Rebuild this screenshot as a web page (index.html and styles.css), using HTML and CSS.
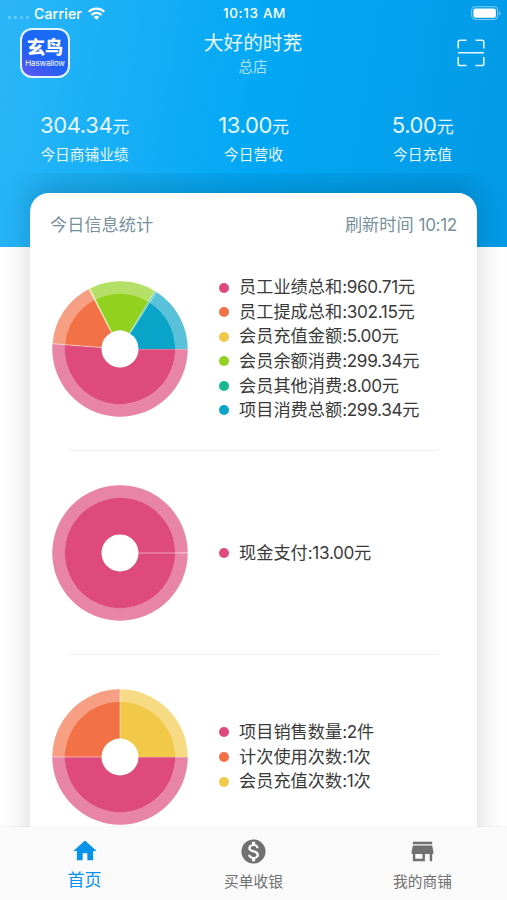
FILE: index.html
```html
<!DOCTYPE html>
<html lang="zh-CN">
<head>
    <meta charset="UTF-8">
    <meta name="viewport" content="width=device-width, initial-scale=1.0">
    <title>首页</title>
    <link rel="stylesheet" href="styles.css">
</head>
<body>
    <header class="header">
        <div class="status-bar">
            <div class="carrier">
                <span class="signal"><i></i><i></i><i></i><i></i></span>
                <span>Carrier</span>
                <svg class="wifi" viewBox="0 0 20 15" width="19" height="15">
                    <path d="M1.8 5.7a11.8 11.8 0 0 1 16.4 0M4.8 9a7.5 7.5 0 0 1 10.4 0" fill="none" stroke="#fff" stroke-width="2.3"/>
                    <path d="M10 14.2l-2.9-3a4.1 4.1 0 0 1 5.8 0z" fill="#fff"/>
                </svg>
            </div>
            <div class="time">10:13 AM</div>
            <svg class="battery" viewBox="0 0 30 15" width="30" height="15">
                <rect x=".7" y=".7" width="26" height="12.8" rx="3.5" fill="none" stroke="#fff" stroke-opacity=".5"/>
                <rect x="2.4" y="2.4" width="22.5" height="9.4" rx="2" fill="#fff"/>
                <path d="M28 5v4.4q1.5-.7 1.5-2.2T28 5z" fill="#fff" fill-opacity=".5"/>
            </svg>
        </div>
        <div class="title-bar">
            <div class="logo">
                <div class="logo-name">玄鸟</div>
                <div class="logo-sub">Haswallow</div>
            </div>
            <div class="shop">
                <h1>大好的时茺</h1>
                <p>总店</p>
            </div>
            <svg class="scan" viewBox="0 0 28 28" width="28" height="28" fill="none" stroke="#e6f7ff" stroke-width="1.6">
                <path d="M1.2 9.5V3q0-1.8 1.8-1.8h6.5M18.5 1.2H25q1.8 0 1.8 1.8v6.5M26.8 18v6.7q0 1.8-1.8 1.8h-6.5M9.5 26.5H3q-1.8 0-1.8-1.8V18M1 13.8h26"/>
            </svg>
        </div>
        <div class="summary">
            <div class="summary-item">
                <div class="summary-value">304.34<small>元</small></div>
                <div class="summary-label">今日商铺业绩</div>
            </div>
            <div class="summary-item">
                <div class="summary-value">13.00<small>元</small></div>
                <div class="summary-label">今日营收</div>
            </div>
            <div class="summary-item">
                <div class="summary-value">5.00<small>元</small></div>
                <div class="summary-label">今日充值</div>
            </div>
        </div>
    </header>

    <main class="content">
        <div class="card">
            <div class="card-header">
                <span>今日信息统计</span>
                <span>刷新时间 <b>10:12</b></span>
            </div>
            <section class="stat">
                <svg class="pie" viewBox="-68 -68 136 136" data-values="960.71,302.15,5,299.34,8,299.34"></svg>
                <ul class="legend">
                    <li>员工业绩总和<b>:960.71</b>元</li>
                    <li>员工提成总和<b>:302.15</b>元</li>
                    <li>会员充值金额<b>:5.00</b>元</li>
                    <li>会员余额消费<b>:299.34</b>元</li>
                    <li>会员其他消费<b>:8.00</b>元</li>
                    <li>项目消费总额<b>:299.34</b>元</li>
                </ul>
            </section>
            <section class="stat">
                <svg class="pie" viewBox="-68 -68 136 136" data-values="13"></svg>
                <ul class="legend">
                    <li>现金支付<b>:13.00</b>元</li>
                </ul>
            </section>
            <section class="stat">
                <svg class="pie" viewBox="-68 -68 136 136" data-values="2,1,1"></svg>
                <ul class="legend">
                    <li>项目销售数量<b>:2</b>件</li>
                    <li>计次使用次数<b>:1</b>次</li>
                    <li>会员充值次数<b>:1</b>次</li>
                </ul>
            </section>
        </div>
    </main>

    <nav class="tab-bar">
        <a class="tab active">
            <svg viewBox="0 0 24 24" width="28" height="28"><path d="M10 20v-6h4v6h5v-8h3L12 3 2 12h3v8z"/></svg>
            <span>首页</span>
        </a>
        <a class="tab">
            <svg viewBox="0 0 24 24" width="29" height="29"><path d="M12 2C6.48 2 2 6.48 2 12s4.48 10 10 10 10-4.48 10-10S17.52 2 12 2zm1.41 16.09V20h-2.67v-1.93c-1.71-.36-3.16-1.46-3.27-3.4h1.96c.1 1.05.82 1.87 2.65 1.87 1.96 0 2.4-.98 2.4-1.59 0-.83-.44-1.61-2.67-2.14-2.48-.6-4.18-1.62-4.18-3.67 0-1.72 1.39-2.84 3.11-3.21V4h2.67v1.95c1.86.45 2.79 1.86 2.85 3.39H14.3c-.05-1.11-.64-1.87-2.22-1.87-1.5 0-2.4.68-2.4 1.64 0 .84.65 1.39 2.67 1.91s4.18 1.39 4.18 3.91c-.01 1.83-1.38 2.83-3.12 3.16z"/></svg>
            <span>买单收银</span>
        </a>
        <a class="tab">
            <svg viewBox="0 0 24 24" width="29" height="29"><path d="M20 4H4v2h16V4zm1 10v-2l-1-5H4l-1 5v2h1v6h10v-6h4v6h2v-6h1zm-9 4H6v-4h6v4z"/></svg>
            <span>我的商铺</span>
        </a>
    </nav>

    <script>
        const colors = ['#dd4a7b', '#f27147', '#f2c849', '#92d11f', '#19b892', '#0aa4c9'];

        function point(angle, r) {
            return `${(Math.cos(angle) * r).toFixed(3)} ${(Math.sin(angle) * r).toFixed(3)}`;
        }

        function slice(start, end, inner, outer) {
            const large = end - start > Math.PI ? 1 : 0;
            return `M${point(start, inner)}L${point(start, outer)}A${outer} ${outer} 0 ${large} 1 ${point(end, outer)}` +
                `L${point(end, inner)}A${inner} ${inner} 0 ${large} 0 ${point(start, inner)}Z`;
        }

        document.querySelectorAll('.pie').forEach(function(pie) {
            const values = pie.dataset.values.split(',').map(Number);
            const total = values.reduce((a, b) => a + b, 0);
            let angle = 0;
            let html = '';
            values.forEach(function(value, i) {
                // 整圆时留一点缝隙
                const next = angle + Math.min(value / total * Math.PI * 2, Math.PI * 2 - 0.002);
                html += `<path d="${slice(angle, next, 55, 67.7)}" fill="${colors[i]}" opacity="0.68"/>`;
                html += `<path d="${slice(angle, next, 18.5, 55.2)}" fill="${colors[i]}"/>`;
                html += `<path d="M${point(angle, 18.5)}L${point(angle, 67.7)}" stroke="#fff" stroke-opacity="0.5"/>`;
                angle = next;
            });
            pie.innerHTML = html;
        });
    </script>
</body>
</html>
```

FILE: styles.css
```css
* {
    box-sizing: border-box;
}
body {
    margin: 0;
    height: 900px;
    display: flex;
    flex-direction: column;
    overflow: hidden;
    font-family: Inter, 'Noto Sans CJK SC', sans-serif;
    background: linear-gradient(100deg, #2cb6f8 0%, #02a8f4 50%, #0399e5 100%) no-repeat 0 0 / 100% 247px #fff;
    color: #3a3a3a;
}
h1, p, ul {
    margin: 0;
    padding: 0;
    font-weight: normal;
}
b {
    font-weight: normal;
    letter-spacing: -0.35px;
}
.header {
    height: 173px;
    flex: none;
    color: #e6f7ff;
}
.status-bar {
    height: 26px;
    padding: 0 6px 0 8px;
    display: grid;
    grid-template-columns: 1fr auto 1fr;
    align-items: center;
    font-size: 14px;
    font-weight: 500;
    color: #fff;
}
.carrier {
    display: flex;
    align-items: center;
    letter-spacing: 0.2px;
}
.signal {
    display: flex;
    gap: 3px;
    margin: 9px 5px 0 0;
}
.signal i {
    width: 3px;
    height: 3px;
    border-radius: 50%;
    background: rgba(255, 255, 255, 0.35);
}
.wifi {
    margin-left: 5px;
}
.time {
    font-size: 13.5px;
    letter-spacing: 0.65px;
}
.battery {
    justify-self: end;
}
.title-bar {
    height: 52px;
    padding: 2px 22px 0 20px;
    display: grid;
    grid-template-columns: 1fr auto 1fr;
}
.logo {
    width: 50px;
    height: 50px;
    border: 2px solid #e4f5ff;
    border-radius: 12px;
    background: linear-gradient(30deg, #6554f4, #2160f3 40%, #1673f5);
    text-align: center;
    white-space: nowrap;
    color: #fff;
}
.logo-name {
    margin-top: 8px;
    font-size: 18px;
    font-weight: 900;
    line-height: 20px;
}
.logo-sub {
    font-size: 8px;
    line-height: 10px;
    letter-spacing: -0.15px;
}
.shop {
    padding-left: 1px;
    text-align: center;
}
.shop h1 {
    padding-top: 1px;
    font-size: 19.7px;
    line-height: 28px;
}
.shop p {
    font-size: 14.4px;
    line-height: 20px;
    opacity: 0.75;
}
.scan {
    justify-self: end;
    margin-top: 11px;
}
.summary {
    display: grid;
    grid-template-columns: repeat(3, 1fr);
    padding-top: 33px;
    text-align: center;
}
.summary-value {
    font-size: 22px;
    line-height: 28px;
    letter-spacing: -0.35px;
}
.summary-value small {
    font-size: 17px;
}
.summary-label {
    margin-top: 3px;
    font-size: 14.7px;
    line-height: 22px;
}
.content {
    flex: 1;
    min-height: 0;
    padding: 20px 30px 0;
    overflow: hidden;
}
.card {
    height: 800px;
    border-radius: 19px;
    background: #fff;
    box-shadow: 0 -10px 30px rgba(0, 0, 0, 0.17);
}
.card-header {
    height: 54px;
    padding: 19px 20px 0;
    display: flex;
    justify-content: space-between;
    font-size: 17.2px;
    line-height: 26px;
    color: #78909c;
}
.stat {
    height: 204px;
    margin: 0 39px;
    display: flex;
    align-items: center;
    border-bottom: 1px solid #f0f0f0;
}
.pie {
    width: 136px;
    height: 136px;
    flex: none;
    margin-left: -17px;
}
.legend {
    margin-left: 31px;
    padding-top: 1px;
    list-style: none;
    font-size: 17.2px;
    line-height: 24.6px;
    white-space: nowrap;
}
.legend li {
    display: flex;
    align-items: center;
}
.legend li::before {
    content: '';
    width: 10px;
    height: 10px;
    margin-right: 10px;
    border-radius: 50%;
    background: #dd4a7b;
}
.legend li:nth-child(2)::before {
    background: #f27147;
}
.legend li:nth-child(3)::before {
    background: #f2c849;
}
.legend li:nth-child(4)::before {
    background: #92d11f;
}
.legend li:nth-child(5)::before {
    background: #19b892;
}
.legend li:nth-child(6)::before {
    background: #0aa4c9;
}
.tab-bar {
    height: 73px;
    flex: none;
    display: grid;
    grid-template-columns: repeat(3, 1fr);
    background: #fafafa;
    box-shadow: 0 0 2px rgba(0, 0, 0, 0.1);
    position: relative;
}
.tab {
    display: flex;
    flex-direction: column;
    align-items: center;
    padding-top: 10px;
    font-size: 14.7px;
    line-height: 22px;
    color: #707070;
}
.tab svg {
    fill: currentColor;
}
.tab span {
    margin-top: 5px;
}
.tab.active {
    font-size: 17px;
    color: #0893ea;
}
.tab.active span {
    margin-top: 4px;
}
```
